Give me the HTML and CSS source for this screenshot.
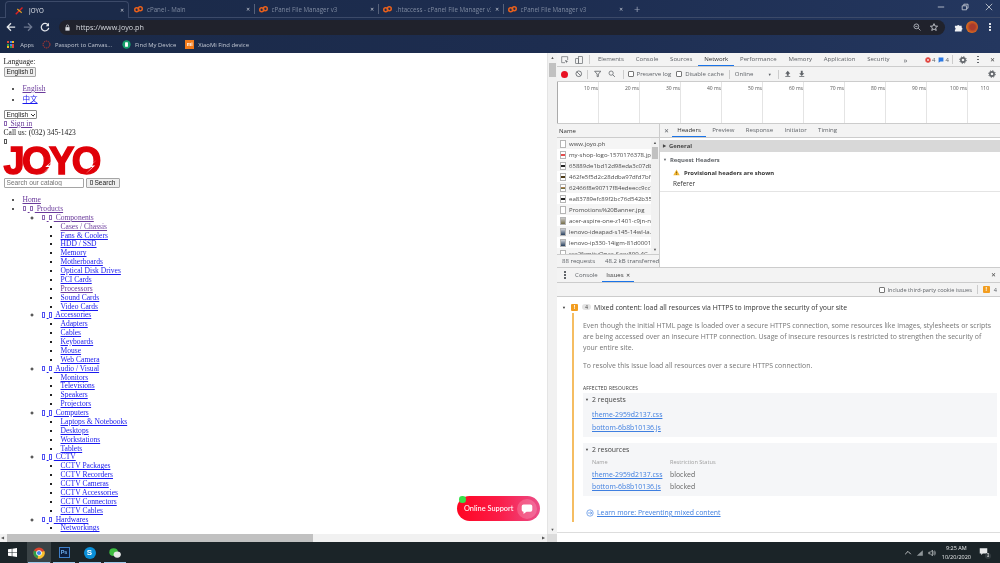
FILE: index.html
```html
<!DOCTYPE html>
<html lang="en">
<head>
<meta charset="utf-8">
<title>JOYO</title>
<link rel="stylesheet" href="styles.css">
</head>
<body>
<header class="browser">
  <div class="tabbar">
    <div class="tab tab-active">
      <svg class="fav" viewBox="0 0 12 12"><path d="M1 11 L10 2" stroke="#e02020" stroke-width="2"/><path d="M3 4 L9 9" stroke="#e0a020" stroke-width="1.4"/></svg>
      <span class="tab-title">JOYO</span><span class="tab-x">✕</span>
    </div>
    <div class="tab"><svg class="fav" viewBox="0 0 12 12"><circle cx="3.6" cy="6.4" r="2.6" fill="none" stroke="#e8601c" stroke-width="2"/><circle cx="8.4" cy="5" r="2.6" fill="none" stroke="#e8601c" stroke-width="2"/></svg><span class="tab-title">cPanel - Main</span><span class="tab-x">✕</span></div>
    <div class="tab tab-sep"><svg class="fav" viewBox="0 0 12 12"><circle cx="3.6" cy="6.4" r="2.6" fill="none" stroke="#e8601c" stroke-width="2"/><circle cx="8.4" cy="5" r="2.6" fill="none" stroke="#e8601c" stroke-width="2"/></svg><span class="tab-title">cPanel File Manager v3</span><span class="tab-x">✕</span></div>
    <div class="tab tab-sep"><svg class="fav" viewBox="0 0 12 12"><circle cx="3.6" cy="6.4" r="2.6" fill="none" stroke="#e8601c" stroke-width="2"/><circle cx="8.4" cy="5" r="2.6" fill="none" stroke="#e8601c" stroke-width="2"/></svg><span class="tab-title">.htaccess - cPanel File Manager v3</span><span class="tab-x">✕</span></div>
    <div class="tab tab-sep"><svg class="fav" viewBox="0 0 12 12"><circle cx="3.6" cy="6.4" r="2.6" fill="none" stroke="#e8601c" stroke-width="2"/><circle cx="8.4" cy="5" r="2.6" fill="none" stroke="#e8601c" stroke-width="2"/></svg><span class="tab-title">cPanel File Manager v3</span><span class="tab-x">✕</span></div>
    <span class="newtab">+</span>
    <div class="winctl">
      <svg viewBox="0 0 10 10"><path d="M1 5 H9" stroke="#cfd4dc" stroke-width="1"/></svg>
      <svg viewBox="0 0 10 10"><path d="M1.5 3.5 H7 V8.5 H1.5 Z M3.5 3.5 V1.5 H8.8 V6.5 H7" fill="none" stroke="#cfd4dc" stroke-width="1"/></svg>
      <svg viewBox="0 0 10 10"><path d="M1 1 L9 9 M9 1 L1 9" stroke="#cfd4dc" stroke-width="1"/></svg>
    </div>
  </div>
  <div class="toolbar">
    <svg class="nav" viewBox="0 0 12 12"><path d="M11 6 H2 M6 1.5 L1.5 6 L6 10.5" fill="none" stroke="#e4e7ec" stroke-width="1.5"/></svg>
    <svg class="nav" viewBox="0 0 12 12"><path d="M1 6 H10 M6 1.5 L10.5 6 L6 10.5" fill="none" stroke="#6d7890" stroke-width="1.5"/></svg>
    <svg class="nav" viewBox="0 0 12 12"><path d="M10 4 A4.5 4.5 0 1 0 10.5 7" fill="none" stroke="#e4e7ec" stroke-width="1.5"/><path d="M10.8 1 V5 H6.8 Z" fill="#e4e7ec"/></svg>
    <div class="omnibox">
      <svg class="lock" viewBox="0 0 10 10"><rect x="2" y="4.5" width="6" height="5" fill="#d9dce2"/><path d="M3.3 4.5 V3 A1.7 1.7 0 0 1 6.7 3 V4.5" fill="none" stroke="#d9dce2"/></svg>
      <span class="url">https://www.joyo.ph</span>
      <svg class="omni-ico" viewBox="0 0 10 10"><circle cx="4.2" cy="4.2" r="3" fill="none" stroke="#c4c8d0"/><path d="M6.5 6.5 L9.3 9.3 M2.8 4.2 H5.6" stroke="#c4c8d0"/></svg>
      <svg class="omni-ico star" viewBox="0 0 10 10"><path d="M5 .8 L6.2 3.8 L9.5 4 L7 6.1 L7.8 9.3 L5 7.5 L2.2 9.3 L3 6.1 L.5 4 L3.8 3.8 Z" fill="none" stroke="#d9dce2"/></svg>
    </div>
    <svg class="puzzle" viewBox="0 0 10 10"><path d="M1 3 H3.4 A1.4 1.4 0 0 1 6 3 H8.5 V5 A1.4 1.4 0 0 1 8.5 7.6 V9.5 H1 V7.5 A1.4 1.4 0 0 0 1 5 Z" fill="#f0f1f4"/></svg>
    <span class="avatar"></span>
    <span class="kebab"><i></i><i></i><i></i></span>
  </div>
  <div class="bookmarks">
    <span class="bm"><span class="apps"><i class="c1"></i><i class="c2"></i><i class="c3"></i><i class="c4"></i><i class="c2"></i><i class="c1"></i><i class="c3"></i><i class="c4"></i><i class="c1"></i></span>Apps</span>
    <span class="bm bm-pass"><svg class="bm-ico" viewBox="0 0 10 10"><circle cx="5" cy="5" r="3.8" fill="none" stroke="#c9372c" stroke-width="1.1" stroke-dasharray="1.6 .8"/></svg>Passport to Canvas...</span>
    <span class="bm bm-find"><svg class="bm-ico" viewBox="0 0 10 10"><circle cx="5" cy="5" r="4.6" fill="#14a06a"/><rect x="3.4" y="2.4" width="3.2" height="5.2" rx=".6" fill="#fff"/></svg>Find My Device</span>
    <span class="bm bm-mi"><span class="mi">mi</span>XiaoMi Find device</span>
  </div>
</header>

<main class="workspace">
  <section class="page-col">
    <div class="page-row">
      <div class="page">
        <div>Language:</div>
        <button class="pbtn">English <span class="tofu tofu-sans"></span></button>
        <ul class="lang">
          <li><a class="seen" href="#">English</a></li>
          <li><a href="#" class="cjk">中文</a></li>
        </ul>
        <select class="psel"><option>English</option></select>
        <div><a class="seen" href="#"><span class="tofu"></span> Sign in</a></div>
        <div>Call us: (032) 345-1423</div>
        <div><span class="tofu"></span></div>
        <div class="logo"><span class="logo-text">JOYO</span><svg class="bolt bolt-a" viewBox="0 0 10 10"><path d="M9 0 L3 5 H6 L1 10 L8 4 H5 Z" fill="#fff"/></svg><svg class="bolt bolt-b" viewBox="0 0 10 10"><path d="M9 0 L3 5 H6 L1 10 L8 4 H5 Z" fill="#fff"/></svg></div>
        <div class="searchrow"><input class="psearch" placeholder="Search our catalog"><button class="pbtn pbtn-search"><span class="tofu tofu-sans"></span> Search</button></div>
        <ul class="menu">
          <li><a class="seen" href="#">Home</a></li>
          <li><a class="seen" href="#"><span class="tofu"></span> <span class="tofu"></span> Products</a>
            <ul>
              <li><a class="seen" href="#"><span class="tofu"></span> <span class="tofu"></span> Components</a>
                <ul>
                  <li><a class="seen" href="#">Cases / Chassis</a></li>
                  <li><a href="#">Fans &amp; Coolers</a></li>
                  <li><a href="#">HDD / SSD</a></li>
                  <li><a href="#">Memory</a></li>
                  <li><a href="#">Motherboards</a></li>
                  <li><a href="#">Optical Disk Drives</a></li>
                  <li><a href="#">PCI Cards</a></li>
                  <li><a class="seen" href="#">Processors</a></li>
                  <li><a href="#">Sound Cards</a></li>
                  <li><a href="#">Video Cards</a></li>
                </ul>
              </li>
              <li><a href="#"><span class="tofu"></span> <span class="tofu"></span> Accessories</a>
                <ul>
                  <li><a href="#">Adapters</a></li>
                  <li><a href="#">Cables</a></li>
                  <li><a href="#">Keyboards</a></li>
                  <li><a href="#">Mouse</a></li>
                  <li><a href="#">Web Camera</a></li>
                </ul>
              </li>
              <li><a href="#"><span class="tofu"></span> <span class="tofu"></span> Audio / Visual</a>
                <ul>
                  <li><a href="#">Monitors</a></li>
                  <li><a href="#">Televisions</a></li>
                  <li><a href="#">Speakers</a></li>
                  <li><a href="#">Projectors</a></li>
                </ul>
              </li>
              <li><a href="#"><span class="tofu"></span> <span class="tofu"></span> Computers</a>
                <ul>
                  <li><a href="#">Laptops &amp; Notebooks</a></li>
                  <li><a href="#">Desktops</a></li>
                  <li><a href="#">Workstations</a></li>
                  <li><a href="#">Tablets</a></li>
                </ul>
              </li>
              <li><a href="#"><span class="tofu"></span> <span class="tofu"></span> CCTV</a>
                <ul>
                  <li><a href="#">CCTV Packages</a></li>
                  <li><a href="#">CCTV Recorders</a></li>
                  <li><a href="#">CCTV Cameras</a></li>
                  <li><a href="#">CCTV Accessories</a></li>
                  <li><a href="#">CCTV Connectors</a></li>
                  <li><a href="#">CCTV Cables</a></li>
                </ul>
              </li>
              <li><a href="#"><span class="tofu"></span> <span class="tofu"></span> Hardwares</a>
                <ul>
                  <li><a href="#">Networkings</a></li>
                </ul>
              </li>
            </ul>
          </li>
        </ul>
      </div>
      <div class="vscroll"><span class="arrow">▲</span><span class="vthumb"></span><span class="arrow arrow-end">▼</span></div>
    </div>
    <div class="hscroll"><span class="arrow">◀</span><span class="hthumb"></span><span class="arrow arrow-end">▶</span><span class="corner"></span></div>
    <div class="chat">
      <span class="chat-dot"></span>
      <span class="chat-label">Online Support</span>
      <span class="chat-bubble"><svg viewBox="0 0 12 12"><path d="M2.5 1.5 H9.5 A1.8 1.8 0 0 1 11.3 3.3 V7 A1.8 1.8 0 0 1 9.5 8.8 H5.5 L2.5 11 V8.8 A1.8 1.8 0 0 1 .7 7 V3.3 A1.8 1.8 0 0 1 2.5 1.5 Z" fill="#fff"/></svg></span>
    </div>
  </section>

  <section class="devtools">
    <div class="dt-tabs">
      <svg class="dt-ico" viewBox="0 0 12 12"><path d="M1 1 H10 V6 M1 1 V10 H6" fill="none" stroke="#5f6368"/><path d="M6 6 L11 8 L8.6 8.8 L8 11 Z" fill="#5f6368"/></svg>
      <svg class="dt-ico" viewBox="0 0 12 12"><rect x="5" y="1" width="6" height="10" fill="none" stroke="#5f6368"/><rect x="1" y="4" width="4" height="7" fill="none" stroke="#5f6368"/></svg>
      <span class="vline"></span>
      <span class="dt-tab">Elements</span><span class="dt-tab">Console</span><span class="dt-tab">Sources</span><span class="dt-tab dt-tab-on">Network</span><span class="dt-tab">Performance</span><span class="dt-tab">Memory</span><span class="dt-tab">Application</span><span class="dt-tab">Security</span>
      <span class="dt-more">»</span>
      <span class="counts"><svg viewBox="0 0 10 10"><circle cx="5" cy="5" r="4.5" fill="#e0403a"/><path d="M3 3 L7 7 M7 3 L3 7" stroke="#fff"/></svg>4<svg viewBox="0 0 10 10"><path d="M1 1 H9 V7.5 H4 L1 9.5 Z" fill="#2a78e4"/></svg>4</span>
      <span class="vline"></span>
      <svg class="dt-gear" viewBox="0 0 12 12"><circle cx="6" cy="6" r="3.2" fill="none" stroke="#5f6368" stroke-width="2.4"/><circle cx="6" cy="6" r="5" fill="none" stroke="#5f6368" stroke-width="1.5" stroke-dasharray="1.9 2"/></svg>
      <span class="dt-kebab"><i></i><i></i><i></i></span>
      <span class="dt-close">✕</span>
    </div>
    <div class="dt-bar">
      <span class="rec"></span>
      <svg class="dt-ico2 stop" viewBox="0 0 12 12"><circle cx="6" cy="6" r="4.5" fill="none" stroke="#5f6368" stroke-width="1.3"/><path d="M3 3 L9 9" stroke="#5f6368" stroke-width="1.3"/></svg>
      <span class="vline"></span>
      <svg class="dt-ico2" viewBox="0 0 12 12"><path d="M1 2 H11 L7 6.5 V10.5 H5 V6.5 Z" fill="none" stroke="#5f6368" stroke-width="1.3"/></svg>
      <svg class="dt-ico2" viewBox="0 0 12 12"><circle cx="5" cy="5" r="3.4" fill="none" stroke="#5f6368" stroke-width="1.2"/><path d="M7.5 7.5 L11 11" stroke="#5f6368" stroke-width="1.3"/></svg>
      <span class="vline"></span>
      <label class="chk chk-first"><span class="box"></span>Preserve log</label>
      <label class="chk"><span class="box"></span>Disable cache</label>
      <span class="vline vline-tight"></span>
      <span class="online">Online</span><span class="caret">▼</span>
      <span class="vline"></span>
      <svg class="dt-ico2" viewBox="0 0 12 12"><path d="M6 1 L10 6 H7.5 V9 H4.5 V6 H2 Z M2 10 H10 V11.2 H2 Z" fill="#5f6368"/></svg>
      <svg class="dt-ico2" viewBox="0 0 12 12"><path d="M4.5 1 H7.5 V5 H10 L6 9.4 L2 5 H4.5 Z M2 10 H10 V11.2 H2 Z" fill="#5f6368"/></svg>
      <span class="bar-end"><svg class="dt-gear" viewBox="0 0 12 12"><circle cx="6" cy="6" r="3.2" fill="none" stroke="#5f6368" stroke-width="2.4"/><circle cx="6" cy="6" r="5" fill="none" stroke="#5f6368" stroke-width="1.5" stroke-dasharray="1.9 2"/></svg></span>
    </div>
    <div class="timeline">
      <span>10 ms</span><span>20 ms</span><span>30 ms</span><span>40 ms</span><span>50 ms</span><span>60 ms</span><span>70 ms</span><span>80 ms</span><span>90 ms</span><span>100 ms</span><span class="tl-last">110</span>
    </div>
    <div class="net">
      <div class="net-list">
        <div class="net-head">Name</div>
        <div class="net-rows">
          <div class="rows">
            <div class="nr alt"><span class="fi"></span>www.joyo.ph</div>
            <div class="nr"><span class="fi fi-red"></span>my-shop-logo-1570176378.jpg</div>
            <div class="nr alt"><span class="fi fi-dark"></span>65889de1bd12d98eda3c07db</div>
            <div class="nr"><span class="fi fi-brown"></span>462fe5f5d2c28ddba97dfd7bf0</div>
            <div class="nr alt"><span class="fi fi-mix"></span>62466f8e90717f84edeecc9cc7</div>
            <div class="nr"><span class="fi fi-dark"></span>ea83789efc89f2bc76d542b35.</div>
            <div class="nr alt"><span class="fi"></span>Promotions%20Banner.jpg</div>
            <div class="nr"><span class="fi fi-pic"></span>acer-aspire-one-z1401-c9jn-n</div>
            <div class="nr alt"><span class="fi fi-pic2"></span>lenovo-ideapad-s145-14wl-la.</div>
            <div class="nr"><span class="fi fi-pic2"></span>lenovo-ip330-14igm-81d0001</div>
            <div class="nr alt"><span class="fi"></span>ssc2fsmituOnac-Sasy300-4C</div>
          </div>
          <div class="list-scroll"><span class="arrow">▲</span><span class="list-thumb"></span><span class="arrow arrow-end">▼</span></div>
        </div>
        <div class="net-foot"><span>88 requests</span><span class="foot-sep"></span><span>48.2 kB transferred</span></div>
      </div>
      <div class="net-detail">
        <div class="det-tabs"><span class="det-x">✕</span><span class="det-tab det-on">Headers</span><span class="det-tab">Preview</span><span class="det-tab">Response</span><span class="det-tab">Initiator</span><span class="det-tab">Timing</span></div>
        <div class="det-general"><span class="tri">▶</span>General</div>
        <div class="det-req"><span class="tri">▼</span>Request Headers</div>
        <div class="det-prov"><svg viewBox="0 0 10 10"><path d="M5 .8 L9.6 9 H.4 Z" fill="#f2b632"/><path d="M5 3.6 V6.4 M5 7.2 V8.2" stroke="#5b4308"/></svg>Provisional headers are shown</div>
        <div class="det-ref">Referer</div>
      </div>
    </div>
    <div class="drawer-tabs">
      <span class="dr-kebab"><i></i><i></i><i></i></span>
      <span class="dr-tab">Console</span>
      <span class="dr-tab dr-on">Issues <span class="dr-x">✕</span></span>
      <span class="dt-close dr-close">✕</span>
    </div>
    <div class="issues-bar">
      <label class="chk"><span class="box"></span>Include third-party cookie issues</label>
      <span class="vline"></span>
      <span class="flag">!</span><span class="issues-n">4</span>
    </div>
    <div class="issues">
      <div class="issue-title"><span class="tri">▼</span><span class="flag">!</span><span class="pill">4</span>Mixed content: load all resources via HTTPS to improve the security of your site</div>
      <div class="issue-body">
        <p class="desc">Even though the initial HTML page is loaded over a secure HTTPS connection, some resources like images, stylesheets or scripts are being accessed over an insecure HTTP connection. Usage of insecure resources is restricted to strengthen the security of your entire site.</p>
        <p class="desc desc-2">To resolve this issue load all resources over a secure HTTPS connection.</p>
        <div class="affected">AFFECTED RESOURCES</div>
        <div class="res res-1">
          <div class="res-h"><span class="tri">▼</span>2 requests</div>
          <div class="res-link"><a href="#">theme-2959d2137.css</a></div>
          <div class="res-link"><a href="#">bottom-6b8b10136.js</a></div>
        </div>
        <div class="res res-2">
          <div class="res-h"><span class="tri">▼</span>2 resources</div>
          <div class="res-grid">
            <span class="res-th">Name</span><span class="res-th">Restriction Status</span>
            <a href="#">theme-2959d2137.css</a><span class="blocked">blocked</span>
            <a href="#">bottom-6b8b10136.js</a><span class="blocked">blocked</span>
          </div>
        </div>
        <div class="learn"><svg viewBox="0 0 10 10"><circle cx="5" cy="5" r="4" fill="none" stroke="#3f7fe0" stroke-width=".8"/><path d="M2.4 5 H7.2 M5.4 3.2 L7.4 5 L5.4 6.8" fill="none" stroke="#3f7fe0" stroke-width=".8"/></svg><a href="#">Learn more: Preventing mixed content</a></div>
      </div>
    </div>
    <div class="dt-bottom"></div>
  </section>
</main>

<footer class="taskbar">
  <svg class="win" viewBox="0 0 12 12"><path d="M0 1.8 L5 1 V5.6 H0 Z M5.8 .9 L12 0 V5.6 H5.8 Z M0 6.4 H5 V11 L0 10.2 Z M5.8 6.4 H12 V12 L5.8 11.1 Z" fill="#fff"/></svg>
  <span class="tb-item tb-active"><svg viewBox="0 0 12 12"><circle cx="6" cy="6" r="5.6" fill="#d9432f"/><path d="M6 6 L1 3.4 A5.6 5.6 0 0 0 4.6 11.4 Z" fill="#2f9e48"/><path d="M6 6 L11.3 4 A5.6 5.6 0 0 1 4.6 11.4 Z" fill="#f5c12e"/><circle cx="6" cy="6" r="2.8" fill="#fff"/><circle cx="6" cy="6" r="2.1" fill="#3f83e8"/></svg></span>
  <span class="tb-item tb-open"><span class="ps">Ps</span></span>
  <span class="tb-item tb-open"><span class="skype">S</span></span>
  <span class="tb-item tb-open"><svg viewBox="0 0 14 12"><ellipse cx="5.4" cy="5" rx="5" ry="4.4" fill="#3dbb3f"/><ellipse cx="9.6" cy="7.8" rx="4.2" ry="3.6" fill="#e6e8e6"/></svg></span>
  <div class="tray">
    <svg class="tray-ico" viewBox="0 0 10 10"><path d="M1.5 6.5 L5 3 L8.5 6.5" fill="none" stroke="#e8eaeb"/></svg>
    <svg class="tray-ico" viewBox="0 0 10 10"><path d="M1 8.5 L8.5 1.5 V8.5 Z" fill="#8f9699"/></svg>
    <svg class="tray-ico" viewBox="0 0 10 10"><path d="M1 4 H3 L5.5 1.5 V8.5 L3 6 H1 Z" fill="none" stroke="#e8eaeb" stroke-width=".8"/><path d="M7 3 Q8.4 5 7 7 M8.3 2 Q10 5 8.3 8" fill="none" stroke="#e8eaeb" stroke-width=".7"/></svg>
    <div class="clock"><div>9:25 AM</div><div>10/20/2020</div></div>
    <span class="notif"><svg viewBox="0 0 12 12"><path d="M1 1.5 H11 V8.5 H5 L3 10.5 V8.5 H1 Z" fill="#e8eaeb"/></svg><b>3</b></span>
  </div>
</footer>
</body>
</html>
```

FILE: styles.css
```css
* { box-sizing: border-box; }
html, body { margin: 0; height: 100%; }
html { background: #fff; }
body {
  width: 1000px;
  height: 563px;
  overflow: hidden;
  display: flex;
  flex-direction: column;
  font-family: "Open Sans", "Noto Sans", sans-serif;
  background: #fff;
  filter: blur(.45px);
}

/* ---------- browser chrome ---------- */
.browser {
  height: 53px;
  flex: none;
  background: linear-gradient(90deg, #1a2947 0%, #1d2d50 55%, #24375f 100%);
  color: #d8dce4;
}
.tabbar {
  height: 18px;
  display: flex;
  align-items: flex-end;
  padding-left: 5px;
  border-bottom: 1px solid #3c4a69;
  position: relative;
}
.tab {
  width: 124.5px;
  height: 16px;
  display: flex;
  align-items: center;
  padding: 0 4px 0 5px;
  font-size: 6.2px;
  color: #7f8aa0;
  position: relative;
}
.tab-active {
  width: 124px;
  height: 17px;
  margin-bottom: -1px;
  background: #1b2a49;
  border: 1px solid #3c4a69;
  border-bottom: 0;
  border-radius: 4px 4px 0 0;
  color: #e3e6ec;
}
.tab-sep::before {
  content: "";
  position: absolute;
  left: 0;
  top: 3px;
  height: 10px;
  width: 1px;
  background: #56617a;
}
.fav { width: 9px; height: 9px; flex: none; margin-right: 4px; }
.tab-active .fav { margin: 0 5px 0 4px; }
.tab-title { flex: 1; white-space: nowrap; overflow: hidden; }
.tab-x { font-size: 5px; color: #c8ccd4; margin-left: 4px; }
.newtab { font-size: 11px; line-height: 16px; margin-left: 7px; color: #9aa4b8; }
.winctl {
  margin-left: auto;
  display: flex;
  gap: 16px;
  align-self: flex-start;
  padding: 3px 7px 0 0;
}
.winctl svg { width: 8px; height: 8px; }

.toolbar {
  height: 18px;
  display: flex;
  align-items: center;
  padding: 0 8px 0 6px;
}
.nav { width: 10px; height: 10px; margin-right: 7px; flex: none; }
.omnibox {
  width: 886px;
  height: 15px;
  margin-left: 2px;
  background: #20222c;
  border-radius: 8px;
  display: flex;
  align-items: center;
  padding: 0 7px 0 5px;
}
.lock { width: 7px; height: 7px; margin-right: 5px; }
.url { font-size: 7.2px; color: #d6d9df; flex: 1; }
.omni-ico { width: 8px; height: 8px; margin-left: 9px; }
.puzzle { width: 9px; height: 9px; margin-left: 9px; }
.avatar {
  width: 12px;
  height: 12px;
  border-radius: 50%;
  margin-left: 3px;
  background: radial-gradient(circle at 55% 50%, #a93a2c 30%, #dd6f1e 70%);
}
.kebab, .dt-kebab, .dr-kebab {
  display: flex;
  flex-direction: column;
  gap: 1.4px;
  margin-left: 11px;
}
.kebab i, .dt-kebab i, .dr-kebab i { width: 1.6px; height: 1.6px; background: #dfe2e8; display: block; }

.bookmarks {
  height: 17px;
  display: flex;
  align-items: center;
  font-size: 5.9px;
  color: #c2c8d3;
  white-space: nowrap;
  padding-left: 7px;
}
.bm { display: flex; align-items: center; }
.apps {
  display: grid;
  grid-template-columns: repeat(3, 2px);
  grid-auto-rows: 2px;
  gap: .6px;
  margin-right: 6px;
}
.apps i { display: block; }
.c1 { background: #d9483b; }
.c2 { background: #3f83e8; }
.c3 { background: #f1b824; }
.c4 { background: #2f9e48; }
.bm-ico { width: 9px; height: 9px; margin-right: 4px; }
.bm-pass { margin-left: 8px; }
.bm-find { margin-left: 10px; }
.bm-mi { margin-left: 9px; }
.mi {
  width: 9px;
  height: 9px;
  margin-right: 4px;
  background: #f27a1a;
  color: #fff;
  font: 700 5px/9px "Liberation Sans", sans-serif;
  text-align: center;
}

/* ---------- layout ---------- */
.workspace { flex: 1; display: flex; min-height: 0; }
.page-col {
  width: 557px;
  flex: none;
  display: flex;
  flex-direction: column;
  position: relative;
}
.page-row { flex: 1; display: flex; min-height: 0; }

/* ---------- unstyled page ---------- */
.page {
  flex: 1;
  min-width: 0;
  overflow: hidden;
  padding: 5px 0 0 3.5px;
  font: 7.55px/8.87px "Liberation Serif", serif;
  color: #222;
}
.page a { color: #1a1aee; text-decoration: underline; }
.page a.seen { color: #6a3a9b; }
.cjk { font-family: "Noto Sans CJK SC", sans-serif; }
.tofu {
  display: inline-block;
  width: 3px;
  height: 5.5px;
  margin-right: 2.2px;
  border: .5px solid currentColor;
  vertical-align: -.5px;
  opacity: .75;
}
.tofu-sans { color: #555; margin-right: 0; }
.pbtn {
  display: block;
  height: 10px;
  padding: 0 2px;
  font: 6.6px/8px "Liberation Sans", sans-serif;
  color: #222;
  background: #efefef;
  border: 1px solid #a5a5a5;
  border-radius: 1px;
}
.lang, .menu, .menu ul { margin: 0; padding: 0 0 0 19px; list-style: disc; }
.lang { margin: 7px 0 7px; height: 19px; padding-left: 19px; }
.lang li { height: 9.7px; line-height: 9.7px; }
.psel {
  display: block;
  height: 9px;
  width: 33px;
  margin-bottom: 1px;
  padding: 0 0 0 2px;
  font: 6.6px/7px "Liberation Sans", sans-serif;
  color: #222;
  border: 1px solid #8a8a8a;
  border-radius: 1px;
  appearance: none;
  background:
    linear-gradient(45deg, transparent 42%, #333 42%, #333 62%, transparent 62%) 26px 3px / 2.5px 2.5px no-repeat,
    linear-gradient(-45deg, transparent 42%, #333 42%, #333 62%, transparent 62%) 28px 3px / 2.5px 2.5px no-repeat,
    #fff;
}
.logo {
  position: relative;
  height: 30px;
  width: 97px;
  margin-top: -1px;
}
.logo-text {
  display: block;
  font: 700 38px/30px "Liberation Sans", sans-serif;
  letter-spacing: -2.6px;
  color: #e00008;
  -webkit-text-stroke: 1.4px #e00008;
}
.bolt { position: absolute; width: 14px; height: 14px; }
.bolt-a { left: 37px; top: 14px; }
.bolt-b { left: 80px; top: 14px; }
.searchrow { display: flex; gap: 2px; height: 10px; margin-top: 2px; }
.psearch {
  width: 80px;
  height: 10px;
  padding: 0 2px;
  font: 6.6px "Liberation Sans", sans-serif;
  border: 1px solid #a5a5a5;
  border-radius: 1px;
}
.pbtn-search { width: 34px; }
.menu { margin-top: 8.5px; }
.menu ul { padding-left: 19px; }
.menu > li > ul { list-style: circle; }
.menu > li > ul > li > ul { list-style: square; }

/* ---------- scrollbars ---------- */
.vscroll {
  width: 10px;
  flex: none;
  background: #f1f1f1;
  border-left: 1px solid #e4e4e4;
  display: flex;
  flex-direction: column;
  align-items: center;
  position: relative;
}
.arrow { font-size: 4px; line-height: 9px; color: #555; }
.arrow-end { margin-top: auto; }
.vthumb { width: 7px; height: 14px; background: #c1c1c1; margin-top: .5px; }
.hscroll {
  height: 8.5px;
  flex: none;
  background: #f1f1f1;
  display: flex;
  align-items: center;
  padding-left: 1px;
}
.hthumb { width: 306px; height: 8px; background: #c1c1c1; margin-left: 3px; }
.hscroll .arrow-end { margin-top: 0; margin-left: auto; margin-right: 2px; }
.corner { width: 10px; height: 100%; background: #dcdcdc; }

/* ---------- chat widget ---------- */
.chat {
  position: absolute;
  left: 457px;
  top: 443px;
  width: 83px;
  height: 25px;
  border-radius: 13px;
  background: linear-gradient(90deg, #ff0522 0%, #fb1c47 50%, #ec4d88 100%);
  display: flex;
  align-items: center;
  color: #fff;
  font: 500 7.4px "Lato", sans-serif;
}
.chat-dot {
  position: absolute;
  left: 2px;
  top: 0;
  width: 6.5px;
  height: 6.5px;
  border-radius: 50%;
  background: #37e04a;
}
.chat-label { margin-left: 7px; white-space: nowrap; }
.chat-bubble {
  width: 20px;
  height: 20px;
  margin-left: auto;
  margin-right: 3px;
  border-radius: 50%;
  background: rgba(255,255,255,.18);
  display: flex;
  align-items: center;
  justify-content: center;
}
.chat-bubble svg { width: 12px; height: 12px; }

/* ---------- devtools ---------- */
.devtools {
  flex: 1;
  min-width: 0;
  display: flex;
  flex-direction: column;
  font-size: 6.05px;
  color: #5f6368;
  background: #fff;
}
.vline { width: 1px; height: 9px; background: #ccc; flex: none; }
.dt-tabs, .dt-bar {
  display: flex;
  align-items: center;
  background: #f3f3f3;
  border-bottom: 1px solid #ccc;
  white-space: nowrap;
}
.dt-tabs { height: 14px; padding-left: 4px; }
.dt-bar { height: 15px; padding-left: 4px; }
.dt-ico { width: 8px; height: 8px; margin-right: 6px; }
.dt-tabs .vline { margin: 0; }
.dt-tabs .dt-ico + .vline { margin-right: 2px; }
.dt-tab { padding: 0 5.9px; height: 13px; line-height: 13px; }
.dt-tab-on { color: #333; box-shadow: inset 0 -1px 0 #1a73e8; }
.dt-more { margin-left: 8px; font-size: 8px; }
.counts { display: flex; align-items: center; gap: 1px; margin: 0 3px 0 auto; }
.counts svg { width: 6px; height: 6px; margin-left: 2px; }
.dt-gear { width: 8px; height: 8px; margin-left: 6px; }
.dt-kebab { margin-left: 10px; }
.dt-kebab i, .dr-kebab i { background: #5f6368; }
.dt-close { margin-left: auto; padding-right: 5.5px; font-size: 6px; color: #444; }
.dt-tabs .dt-close { margin-left: 11px; }
.rec { width: 7px; height: 7px; border-radius: 50%; background: #e81123; margin: 0 7px 0 0; }
.dt-ico2 { width: 7.5px; height: 7.5px; margin: 0 7px 0 0; }
.dt-ico2.stop { margin-right: 4px; }
.dt-bar .vline { margin: 0 6px 0 0; }
.dt-bar .vline-tight { margin-right: 5px; }
.chk { display: flex; align-items: center; margin-right: 5px; }
.chk-first { margin-left: -2px; }
.box { width: 6px; height: 6px; border: 1px solid #777; border-radius: 1px; margin-right: 3px; background: #fff; }
.online { width: 33px; }
.caret { font-size: 4px; margin-right: 6px; }
.dt-bar .caret + .vline { margin-right: 5px; }
.bar-end { margin-left: auto; padding-right: 4px; display: flex; }
.timeline {
  height: 41px;
  flex: none;
  display: flex;
  padding-left: .5px;
  overflow: hidden;
  font-size: 5px;
  color: #555;
  background: repeating-linear-gradient(90deg, #fff 0, #fff 40px, #e4e4e4 40px, #e4e4e4 41px);
  background-position: 0 0;
  border-left: 1px solid #aaa;
}
.timeline span {
  width: 41px;
  flex: none;
  text-align: right;
  padding: 3px 1.5px 0 0;
}
.timeline .tl-last { padding-right: 0; width: 18px; text-align: left; padding-left: 12px; }

.net { height: 145px; flex: none; display: flex; border-top: 1px solid #ccc; border-bottom: 1px solid #ccc; }
.net-list { width: 103px; flex: none; display: flex; flex-direction: column; border-right: 1px solid #ccc; }
.net-head {
  height: 14px;
  line-height: 14px;
  padding-left: 2px;
  background: #f3f3f3;
  border-bottom: 1px solid #ccc;
  color: #333;
}
.net-rows { flex: 1; min-height: 0; display: flex; overflow: hidden; }
.rows { flex: 1; min-width: 0; overflow: hidden; }
.nr {
  height: 11px;
  display: flex;
  align-items: center;
  padding-left: 3px;
  white-space: nowrap;
  overflow: hidden;
  color: #4a4a4a;
}
.nr.alt { background: #f5f5f5; }
.fi {
  width: 6px;
  height: 8px;
  flex: none;
  margin-right: 3px;
  border: .6px solid #b5b5b5;
  background: #fff;
}
.fi-red { background: linear-gradient(#fff 35%, #e34c4c 35%, #e34c4c 60%, #fff 60%); }
.fi-dark { background: linear-gradient(#fff 30%, #222 30%, #222 65%, #fff 65%); }
.fi-brown { background: linear-gradient(#fff 30%, #4d3a18 30%, #4d3a18 65%, #fff 65%); }
.fi-mix { background: linear-gradient(#fff 30%, #d48a5a 30%, #5a6a3a 65%, #fff 65%); }
.fi-pic { background: linear-gradient(#ccc, #776f4a); }
.fi-pic2 { background: linear-gradient(#cfd3d8, #29405e); }
.list-scroll {
  width: 8px;
  flex: none;
  background: #f1f1f1;
  display: flex;
  flex-direction: column;
  align-items: center;
}
.list-thumb { width: 6px; height: 12px; background: #c1c1c1; }
.net-foot {
  height: 13px;
  display: flex;
  align-items: center;
  padding-left: 5px;
  background: #f3f3f3;
  border-top: 1px solid #ccc;
  white-space: nowrap;
}
.foot-sep { width: 1px; height: 9px; background: #ccc; margin: 0 5px; }
.net-detail { flex: 1; min-width: 0; display: flex; flex-direction: column; }
.det-tabs {
  height: 14px;
  flex: none;
  display: flex;
  align-items: center;
  background: #f3f3f3;
  border-bottom: 1px solid #ccc;
  white-space: nowrap;
}
.det-x { font-size: 5.5px; width: 12px; text-align: center; margin-right: 0; }
.det-tab { padding: 0 5.2px; height: 13px; line-height: 13px; margin-right: 1px; }
.det-on { color: #333; box-shadow: inset 0 -1px 0 #1a73e8; }
.tri { font-size: 4px; margin-right: 3px; vertical-align: 1px; }
.det-general {
  height: 12px;
  margin-top: 2px;
  line-height: 12px;
  padding-left: 3px;
  background: #d8d8d8;
  font-size: 5.9px;
  font-weight: 700;
  color: #444;
  flex: none;
}
.det-req { height: 15px; line-height: 16px; padding-left: 3px; font-size: 5.9px; font-weight: 700; flex: none; }
.det-prov { height: 11px; display: flex; align-items: center; padding-left: 13px; font-size: 5.9px; font-weight: 700; color: #333; }
.det-prov svg { width: 7px; height: 7px; margin-right: 4px; }
.det-ref { height: 11px; line-height: 11px; padding-left: 13px; font-size: 6.4px; color: #333; flex: none; border-bottom: 1px solid #e4e4e4; box-sizing: content-box; padding-bottom: 2px; }

.drawer-tabs {
  height: 15px;
  flex: none;
  display: flex;
  align-items: center;
  background: #f3f3f3;
  border-bottom: 1px solid #ccc;
}
.dr-kebab { margin: 0 5px 0 7px; }
.dr-tab { padding: 0 4.5px; height: 14px; line-height: 15px; margin-right: 0; white-space: nowrap; }
.dr-on { color: #333; box-shadow: inset 0 -1px 0 #1a73e8; width: 32px; padding-left: 4px; }
.dr-x { font-size: 5px; margin-left: 1px; }
.dr-close { margin-left: auto; padding-right: 4px; }
.issues-bar {
  height: 14px;
  flex: none;
  display: flex;
  align-items: center;
  justify-content: flex-end;
  padding-right: 3px;
  background: #f3f3f3;
  border-bottom: 1px solid #ccc;
  font-size: 5.6px;
}
.issues-bar .vline { margin: 0 5px 0 0; }
.flag {
  display: inline-block;
  width: 7px;
  height: 7px;
  background: #f29d1f;
  color: #fff;
  font: 700 6px/7px "Liberation Sans", sans-serif;
  text-align: center;
  border-radius: 1px;
}
.issues-n { margin-left: 4px; }
.issues { flex: 1; min-height: 0; overflow: hidden; }
.issue-title {
  height: 16px;
  display: flex;
  align-items: center;
  padding: 4px 0 0 5px;
  font-size: 6.9px;
  color: #333;
  white-space: nowrap;
}
.issue-title .tri { margin-right: 5px; }
.pill {
  width: 9px;
  height: 6px;
  line-height: 6px;
  border-radius: 3px;
  background: #e4e4e4;
  font-size: 4.6px;
  text-align: center;
  margin: 0 3px 0 4px;
}
.issue-body {
  margin-left: 15px;
  border-left: 2px solid #f5bd62;
  padding: 7px 3.5px 0 9px;
  height: 209px;
}
.desc {
  margin: 0;
  font-size: 6.9px;
  line-height: 11px;
  color: #757575;
}
.desc-2 { margin-top: 7px; }
.affected { margin-top: 13px; font-size: 4.9px; line-height: 8px; color: #333; letter-spacing: .2px; }
.res { background: #f5f6f8; font-size: 6.9px; margin-top: 1px; padding: 1px 0 0 2px; }
.res-1 { height: 44px; }
.res-2 { height: 53px; margin-top: 6px; }
.res-h { height: 11px; line-height: 11px; color: #444; }
.res-link { height: 13px; line-height: 13px; padding-left: 7px; }
.res-1 .res-h { margin-bottom: 3px; }
.res a, .learn a { color: #3f7fe0; text-decoration: underline; }
.res-grid {
  display: grid;
  grid-template-columns: 78px auto;
  justify-content: start;
  grid-auto-rows: 12.6px;
  padding: 1px 0 0 7px;
  line-height: 12px;
}
.res-th { font-size: 5.6px; color: #a0a0a0; }
.blocked { color: #666; }
.learn { display: flex; align-items: center; margin-top: 12px; font-size: 6.9px; padding-left: 3px; }
.learn svg { width: 8px; height: 8px; margin-right: 3px; }
.dt-bottom { height: 10px; flex: none; border-top: 1px solid #ddd; }

/* ---------- taskbar ---------- */
.taskbar {
  height: 21px;
  flex: none;
  display: flex;
  align-items: center;
  background: #1b2428;
  color: #e8eaeb;
}
.win { width: 9px; height: 9px; margin: 0 10px 0 8px; flex: none; }
.tb-item {
  width: 24px;
  height: 21px;
  display: flex;
  align-items: center;
  justify-content: center;
  position: relative;
  margin-right: 1.5px;
}
.tb-item svg { width: 12px; height: 12px; }
.tb-active { background: #3a4346; width: 24px; margin-right: 1px; }
.tb-active::after, .tb-open::after {
  content: "";
  position: absolute;
  bottom: 0;
  left: 1px;
  right: 1px;
  height: 1px;
  background: #9cc8ea;
}
.ps {
  width: 11px;
  height: 11px;
  background: #0d1f3f;
  border: 1px solid #3f7fc8;
  color: #6fb1f0;
  font: 700 5.5px/9px "Liberation Sans", sans-serif;
  text-align: center;
}
.skype {
  width: 12px;
  height: 12px;
  border-radius: 50%;
  background: #0a8fd8;
  color: #fff;
  font: 700 8px/12px "Liberation Sans", sans-serif;
  text-align: center;
}
.tray { margin-left: auto; display: flex; align-items: center; padding-right: 10px; }
.tray-ico { width: 8px; height: 8px; margin-right: 4px; }
.clock { font-size: 5.5px; line-height: 8.5px; text-align: center; margin: 0 8px 0 2px; color: #e8eaeb; white-space: nowrap; }
.notif { position: relative; width: 11px; height: 11px; display: block; }
.notif svg { width: 9px; height: 9px; display: block; }
.notif b {
  position: absolute;
  right: -1px;
  bottom: -1px;
  width: 6px;
  height: 6px;
  border-radius: 50%;
  background: #333c40;
  font: 400 4.5px/6px "Liberation Sans", sans-serif;
  text-align: center;
}
```
